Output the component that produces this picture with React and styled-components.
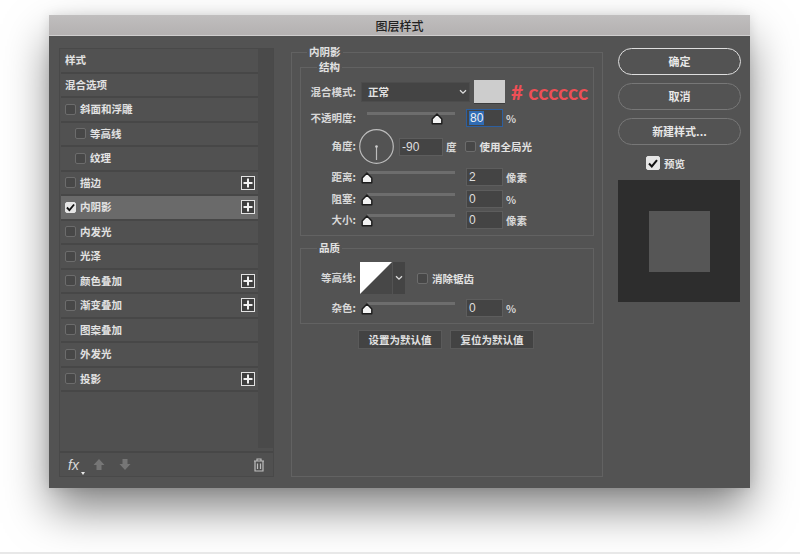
import React from "react";
import styled, { createGlobalStyle } from "styled-components";

const CJK = `"Noto Sans CJK SC", "Noto Sans", sans-serif`;
const LATIN = `"Liberation Sans", "Noto Sans CJK SC", sans-serif`;

const Global = createGlobalStyle`
  html, body { margin: 0; padding: 0; background: #fff; }
  * { box-sizing: border-box; }
`;

const Page = styled.div`
  width: 800px;
  height: 554px;
  padding: 15px 0 0 49px;
  background: #fff;
  border-bottom: 2px solid #e8e8e8;
  overflow: hidden;
  font-family: ${CJK};
`;

const Dialog = styled.div`
  width: 701px;
  height: 473px;
  display: flex;
  flex-direction: column;
  background: #535353;
  border-radius: 2px 2px 0 0;
  box-shadow: 0 22px 42px -2px rgba(0, 0, 0, 0.5), 0 0 12px rgba(0, 0, 0, 0.1);
`;

const TitleBar = styled.div`
  height: 21px;
  flex: none;
  display: flex;
  align-items: center;
  justify-content: center;
  background: linear-gradient(#c0bebe, #b4b1b1);
  border-bottom: 1px solid #d0cece;
  color: #222;
  font-size: 12px;
  font-weight: 500;
`;

const Body = styled.div`
  flex: 1;
  display: flex;
  align-items: flex-start;
  padding: 12px 9px 11px 10px;
`;

const StylePanel = styled.div`
  width: 215px;
  height: 429px;
  flex: none;
  display: grid;
  grid-template-columns: 1fr 15px;
  grid-template-rows: 1fr 25px;
  border: 1px solid #494949;
  background: #505050;
`;

const StyleList = styled.div`
  padding: 0 0 0 1px;
  display: flex;
  flex-direction: column;
`;

const Scrollbar = styled.div`
  background: #4a4a4a;
  margin-bottom: 3px;
`;

const StyleRow = styled.div`
  height: 24.5px;
  flex: none;
  display: flex;
  align-items: center;
  padding-left: ${(p) => (p.$nested ? 14 : 4)}px;
  padding-right: 3px;
  gap: 4px;
  background: ${(p) => (p.$active ? "#6a6a6a" : "#515151")};
  border-bottom: 2px solid #474747;
  color: #e2e2e2;
  font-size: 10.5px;
  font-weight: 700;
`;

const RowName = styled.span`
  flex: 1;
  padding-bottom: 1px;
`;

const Box = styled.span`
  width: ${(p) => p.$size || 11}px;
  height: ${(p) => p.$size || 11}px;
  margin-left: ${(p) => p.$left || 0}px;
  flex: none;
  display: inline-flex;
  align-items: center;
  justify-content: center;
  border-radius: 2px;
  background: ${(p) => (p.$on ? "#e6e6e6" : "#474747")};
  border: 1px solid ${(p) => (p.$on ? "#e6e6e6" : "#6c6c6c")};
`;

const PlusBox = styled.span`
  width: 14px;
  height: 14px;
  flex: none;
  display: inline-flex;
  align-items: center;
  justify-content: center;
  background: #3f3f3f;
  border: 1px solid #e2e2e2;
`;

const PanelFooter = styled.div`
  grid-column: 1 / 3;
  display: flex;
  align-items: center;
  padding: 0 8px;
  border-top: 2px solid #474747;
`;

const FxLabel = styled.span`
  position: relative;
  width: 25px;
  color: #d8d8d8;
  font: italic 14px ${LATIN};
  &::after {
    content: "";
    position: absolute;
    left: 13px;
    top: 15px;
    border: 2px solid transparent;
    border-top: 3px solid #e8e8e8;
  }
`;

const MoveIcon = styled.svg`
  width: 12px;
  height: 13px;
  margin-right: 14px;
  fill: #767676;
`;

const TrashIcon = styled.svg`
  width: 12px;
  height: 14px;
  margin-left: auto;
  fill: none;
  stroke: #bdbdbd;
  stroke-width: 1.2;
`;

const MainColumn = styled.div`
  width: 312px;
  flex: none;
  margin-left: 17px;
`;

const Group = styled.fieldset`
  margin: ${(p) => p.$top || 0}px 0 0;
  padding: ${(p) => p.$pad || "0"};
  min-width: 0;
  height: ${(p) => (p.$height ? `${p.$height}px` : "auto")};
  border: 1px solid #626262;
`;

const Legend = styled.legend`
  margin-left: ${(p) => p.$indent}px;
  padding: 0 2px;
  height: 8px;
  line-height: 8px;
  color: #e2e2e2;
  font-size: 10.5px;
  font-weight: 700;
`;

const Row = styled.div`
  display: flex;
  align-items: center;
  height: ${(p) => p.$h || 18}px;
  margin-top: ${(p) => p.$gap || 0}px;
`;

const FieldLabel = styled.span`
  width: 55px;
  flex: none;
  padding-bottom: 2px;
  text-align: right;
  align-self: center;
  color: #d8d8d8;
  font-size: 10.5px;
  font-weight: 700;
  white-space: nowrap;
`;

const Select = styled.div`
  width: 109px;
  height: 20px;
  margin-left: 5px;
  display: flex;
  align-items: center;
  justify-content: space-between;
  padding: 0 2px 1px 6px;
  background: #444;
  border: 1px solid #4c4c4c;
  color: #e2e2e2;
  font-size: 10.5px;
  font-weight: 700;
`;

const Chevron = styled.svg`
  width: 8px;
  height: 6px;
  fill: none;
  stroke: #ddd;
  stroke-width: 1.3;
`;

const Swatch = styled.div`
  width: 31px;
  height: 24px;
  margin-left: 4px;
  background: #cdcdcd;
  border-bottom: 1px solid #3c3c3c;
`;

const ColorNote = styled.span`
  margin-left: 6px;
  color: #ee4f56;
  font: 700 21px/24px Lato, "Open Sans", sans-serif;
  white-space: nowrap;
`;

const Slider = styled.div`
  position: relative;
  width: 105px;
  height: 18px;
  margin-left: 5px;
  flex: none;
  align-self: flex-start;
  &::before {
    content: "";
    position: absolute;
    left: 6px;
    top: 3px;
    width: 88px;
    height: 3px;
    background: #6d6d6d;
  }
`;

const ThumbIcon = styled.svg`
  position: absolute;
  top: 4px;
  width: 12px;
  height: 12px;
  fill: #f2f2f2;
  stroke: #1c1c1c;
  stroke-width: 1.4;
`;

const NumberField = styled.div`
  width: ${(p) => p.$w || 37}px;
  height: 18px;
  flex: none;
  display: flex;
  align-items: center;
  padding-left: 2px;
  margin-left: ${(p) => p.$left || 0}px;
  background: #444;
  border: 1px solid ${(p) => (p.$focus ? "#2d5f9f" : "#5d5d5d")};
  color: #dedede;
  font: 12px ${LATIN};
`;

const Selection = styled.span`
  padding: 0 1px;
  background: #2f6cb5;
  color: #f0f0f0;
`;

const Unit = styled.span`
  margin-left: 3px;
  color: #d8d8d8;
  font: 700 10.5px ${CJK};
`;

const Dial = styled.svg`
  width: 35px;
  height: 35px;
  margin-left: 3px;
  flex: none;
  fill: none;
  stroke: #bcbcbc;
`;

const CheckText = styled.span`
  margin-left: 4px;
  color: #e2e2e2;
  font-size: 10.5px;
  font-weight: 700;
  white-space: nowrap;
`;

const ContourPreview = styled.svg`
  width: 32px;
  height: 32px;
  margin-left: 4px;
  flex: none;
`;

const ContourMenu = styled.div`
  width: 12px;
  height: 32px;
  flex: none;
  display: flex;
  align-items: center;
  justify-content: center;
  background: #444;
  margin-left: 1px;
`;

const DefaultsBar = styled.div`
  display: flex;
  justify-content: center;
  gap: 8px;
  margin-top: 6px;
  padding-right: 2px;
`;

const DefaultButton = styled.div`
  width: 84px;
  height: 19px;
  display: flex;
  align-items: center;
  justify-content: center;
  padding-bottom: 1px;
  background: #434343;
  border: 1px solid #5a5a5a;
  color: #e2e2e2;
  font-size: 10.5px;
  font-weight: 700;
`;

const SideColumn = styled.div`
  width: 123px;
  flex: none;
  margin-left: 15px;
  display: flex;
  flex-direction: column;
`;

const PillButton = styled.div`
  height: 27px;
  margin-bottom: 8px;
  padding-bottom: 2px;
  display: flex;
  align-items: center;
  justify-content: center;
  border-radius: 14px;
  border: ${(p) => (p.$primary ? "1.5px solid #dedede" : "1px solid #777")};
  color: #e8e8e8;
  font-size: 11px;
  font-weight: 700;
`;

const PreviewToggle = styled.div`
  display: flex;
  align-items: center;
  height: 14px;
  margin-top: 3px;
  padding-left: 28px;
`;

const PreviewPane = styled.div`
  width: 122px;
  height: 122px;
  margin-top: 10px;
  display: flex;
  align-items: center;
  justify-content: center;
  background: #2d2d2d;
`;

const PreviewSample = styled.div`
  width: 61px;
  height: 61px;
  background: #565656;
`;

const Check = () => (
  <svg width="10" height="9" viewBox="0 0 10 9" fill="none" stroke="#111" strokeWidth="2">
    <path d="M1 4.5 L3.8 7.4 L9 1.2" />
  </svg>
);

const Plus = () => (
  <svg width="10" height="10" viewBox="0 0 10 10" stroke="#f2f2f2" strokeWidth="2">
    <path d="M5 0.5 V9.5 M0.5 5 H9.5" />
  </svg>
);

const Thumb = ({ value }) => (
  <ThumbIcon viewBox="0 0 12 12" style={{ left: `${value * 0.88}px` }}>
    <path d="M6 1 L10.8 6 V10.8 H1.2 V6 Z" strokeLinejoin="round" />
  </ThumbIcon>
);

const ChevronDown = () => (
  <Chevron viewBox="0 0 8 6">
    <path d="M1 1.2 L4 4.2 L7 1.2" />
  </Chevron>
);

const effects = [
  { name: "样式", plain: true },
  { name: "混合选项", plain: true },
  { name: "斜面和浮雕" },
  { name: "等高线", nested: true },
  { name: "纹理", nested: true },
  { name: "描边", add: true },
  { name: "内阴影", add: true, on: true },
  { name: "内发光" },
  { name: "光泽" },
  { name: "颜色叠加", add: true },
  { name: "渐变叠加", add: true },
  { name: "图案叠加" },
  { name: "外发光" },
  { name: "投影", add: true },
];

function SliderRow({ label, value, amount, unit, gap, focus }) {
  return (
    <Row $gap={gap}>
      <FieldLabel>{label}</FieldLabel>
      <Slider>
        <Thumb value={value} />
      </Slider>
      <NumberField $focus={focus}>{focus ? <Selection>{amount}</Selection> : amount}</NumberField>
      <Unit>{unit}</Unit>
    </Row>
  );
}

export default function App() {
  return (
    <Page>
      <Global />
      <Dialog>
        <TitleBar>图层样式</TitleBar>
        <Body>
          <StylePanel>
            <StyleList>
              {effects.map((e) => (
                <StyleRow key={e.name} $nested={e.nested} $active={e.on}>
                  {!e.plain && <Box $on={e.on}>{e.on && <Check />}</Box>}
                  <RowName>{e.name}</RowName>
                  {e.add && (
                    <PlusBox>
                      <Plus />
                    </PlusBox>
                  )}
                </StyleRow>
              ))}
            </StyleList>
            <Scrollbar />
            <PanelFooter>
              <FxLabel>fx</FxLabel>
              <MoveIcon viewBox="0 0 12 13">
                <path d="M6 1 L11.5 7 H8.5 V12 H3.5 V7 H0.5 Z" />
              </MoveIcon>
              <MoveIcon viewBox="0 0 12 13">
                <path d="M3.5 1 H8.5 V6 H11.5 L6 12 L0.5 6 H3.5 Z" />
              </MoveIcon>
              <TrashIcon viewBox="0 0 12 14">
                <path d="M1 3 H11 M4 3 V1 H8 V3 M2 3 V13 H10 V3 M4.5 5.5 V11 M7.5 5.5 V11" />
              </TrashIcon>
            </PanelFooter>
          </StylePanel>

          <MainColumn>
            <Group $height={429} $pad="0 8px">
              <Legend $indent={7}>内阴影</Legend>
              <Group $top={7} $pad="9px 0 6px">
                <Legend $indent={16}>结构</Legend>
                <Row $h={24}>
                  <FieldLabel>混合模式:</FieldLabel>
                  <Select>
                    正常
                    <ChevronDown />
                  </Select>
                  <Swatch />
                  <ColorNote># cccccc</ColorNote>
                </Row>
                <SliderRow label="不透明度:" value={80} amount="80" unit="%" gap={5} focus />
                <Row $h={35} $gap={2}>
                  <FieldLabel>角度:</FieldLabel>
                  <Dial viewBox="0 0 35 35">
                    <circle cx="17.5" cy="17.5" r="16.8" strokeWidth="1.2" />
                    <path d="M17.5 17.5 V31" strokeWidth="1.2" />
                    <circle cx="17.5" cy="17.5" r="1.3" fill="#d0d0d0" stroke="none" />
                  </Dial>
                  <NumberField $w={44} $left={5}>-90</NumberField>
                  <Unit>度</Unit>
                  <Box $left={8} />
                  <CheckText>使用全局光</CheckText>
                </Row>
                <SliderRow label="距离:" value={0} amount="2" unit="像素" gap={4} />
                <SliderRow label="阻塞:" value={0} amount="0" unit="%" gap={4} />
                <SliderRow label="大小:" value={0} amount="0" unit="像素" gap={3} />
              </Group>
              <Group $top={8} $pad="10px 0 6px">
                <Legend $indent={16}>品质</Legend>
                <Row $h={32}>
                  <FieldLabel>等高线:</FieldLabel>
                  <ContourPreview viewBox="0 0 32 32">
                    <rect width="32" height="32" fill="#474747" />
                    <path d="M0 0 H32 L0 32 Z" fill="#fff" />
                  </ContourPreview>
                  <ContourMenu>
                    <ChevronDown />
                  </ContourMenu>
                  <Box $left={12} />
                  <CheckText>消除锯齿</CheckText>
                </Row>
                <SliderRow label="杂色:" value={0} amount="0" unit="%" gap={5} />
              </Group>
              <DefaultsBar>
                <DefaultButton>设置为默认值</DefaultButton>
                <DefaultButton>复位为默认值</DefaultButton>
              </DefaultsBar>
            </Group>
          </MainColumn>

          <SideColumn>
            <PillButton $primary>确定</PillButton>
            <PillButton>取消</PillButton>
            <PillButton>新建样式...</PillButton>
            <PreviewToggle>
              <Box $on $size={14}>
                <Check />
              </Box>
              <CheckText>预览</CheckText>
            </PreviewToggle>
            <PreviewPane>
              <PreviewSample />
            </PreviewPane>
          </SideColumn>
        </Body>
      </Dialog>
    </Page>
  );
}
